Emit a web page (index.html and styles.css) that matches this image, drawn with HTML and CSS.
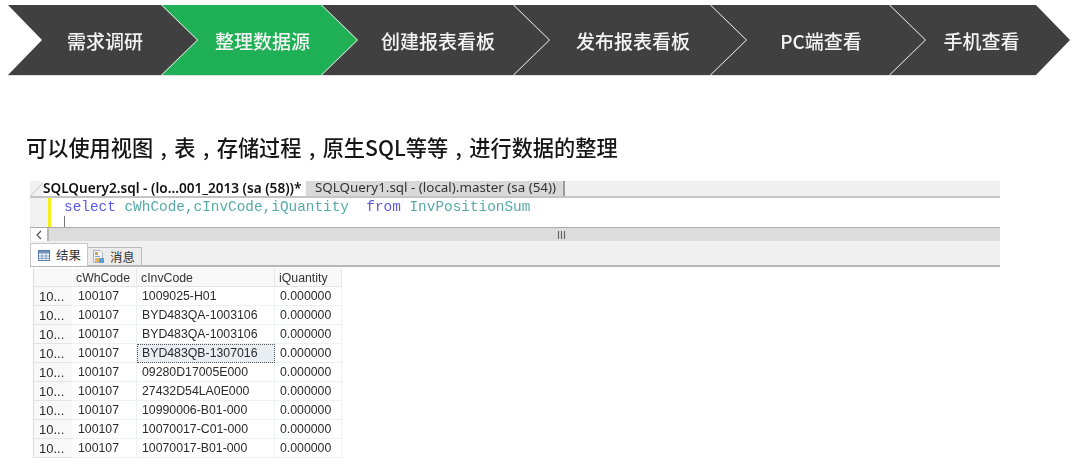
FILE: index.html
```html
<!DOCTYPE html>
<html lang="zh-CN">
<head>
<meta charset="utf-8">
<title>整理数据源</title>
<link rel="stylesheet" href="styles.css">
</head>
<body>
<div class="page">
  <nav class="steps">
    <div class="step first s1"><span>需求调研</span></div>
    <div class="step active s2"><span>整理数据源</span></div>
    <div class="step s3"><span>创建报表看板</span></div>
    <div class="step s4"><span>发布报表看板</span></div>
    <div class="step s5"><span>PC端查看</span></div>
    <div class="step s6"><span>手机查看</span></div>
  </nav>
  <h1 class="title">可以使用视图<span class="cm">,</span>表<span class="cm">,</span>存储过程<span class="cm">,</span>原生SQL等等<span class="cm">,</span>进行数据的整理</h1>
  <section class="ssms">
    <div class="doc-tabs">
      <svg class="slant" width="13" height="16" viewBox="0 0 13 16"><path d="M0 15.5 L13 2" stroke="#c4c4c4" fill="none"/></svg>
      <div class="doc-tab on">SQLQuery2.sql - (lo...001_2013 (sa (58))*</div>
      <div class="doc-tab off">SQLQuery1.sql - (local).master (sa (54))</div>
    </div>
    <div class="editor">
      <div class="gutter"></div>
      <div class="yellow"></div>
      <div class="code">
        <div class="line"><span class="kw">select</span> <span class="id">cWhCode,cInvCode,iQuantity</span>  <span class="kw">from</span> <span class="id">InvPositionSum</span></div>
        <div class="caret"></div>
      </div>
    </div>
    <div class="hscroll">
      <div class="arrow"><svg width="8" height="10" viewBox="0 0 8 10"><path d="M6 1 L2 5 L6 9" stroke="#555" stroke-width="1.2" fill="none"/></svg></div>
      <div class="thumb"><svg width="10" height="8" viewBox="0 0 10 8"><path d="M1.500 0V8M4.500 0V8M7.500 0V8" stroke="#666" stroke-width="1.200"/></svg></div>
    </div>
    <div class="result-tabs">
      <div class="r-tab on">
        <svg width="12" height="11" viewBox="0 0 12 11"><rect x="0.500" y="0.500" width="11" height="10" fill="#fff" stroke="#5b7fa8"/><rect x="1" y="1" width="10" height="2.500" fill="#6f94c0"/><path d="M0.500 6H11.500M0.500 8.300H11.500M4 3.500V10.500M8 3.500V10.500" stroke="#7f9dbe"/></svg>
        <span>结果</span>
      </div>
      <div class="r-tab off">
        <svg width="13" height="14" viewBox="0 0 13 14"><path d="M1.500 0.500H8L10.500 3V12.500H1.500Z" fill="#f6f6f6" stroke="#a9b4c0"/><rect x="3" y="2" width="3" height="3" fill="#d9a05a"/><rect x="3" y="6" width="5" height="1" fill="#7fa6d0"/><rect x="3" y="8" width="4" height="4" fill="#e7b45e"/><rect x="7" y="8" width="5" height="5" fill="#5f9fd8"/></svg>
        <span>消息</span>
      </div>
    </div>
    <div class="grid">
      <div class="cell rh"></div><div class="cell hd c1">cWhCode</div><div class="cell hd c2">cInvCode</div><div class="cell hd c3">iQuantity</div>
      <div class="cell rh">10...</div><div class="cell c1">100107</div><div class="cell c2">1009025-H01</div><div class="cell c3">0.000000</div>
      <div class="cell rh">10...</div><div class="cell c1">100107</div><div class="cell c2">BYD483QA-1003106</div><div class="cell c3">0.000000</div>
      <div class="cell rh">10...</div><div class="cell c1">100107</div><div class="cell c2">BYD483QA-1003106</div><div class="cell c3">0.000000</div>
      <div class="cell rh">10...</div><div class="cell c1">100107</div><div class="cell c2 sel">BYD483QB-1307016</div><div class="cell c3">0.000000</div>
      <div class="cell rh">10...</div><div class="cell c1">100107</div><div class="cell c2">09280D17005E000</div><div class="cell c3">0.000000</div>
      <div class="cell rh">10...</div><div class="cell c1">100107</div><div class="cell c2">27432D54LA0E000</div><div class="cell c3">0.000000</div>
      <div class="cell rh">10...</div><div class="cell c1">100107</div><div class="cell c2">10990006-B01-000</div><div class="cell c3">0.000000</div>
      <div class="cell rh">10...</div><div class="cell c1">100107</div><div class="cell c2">10070017-C01-000</div><div class="cell c3">0.000000</div>
      <div class="cell rh">10...</div><div class="cell c1">100107</div><div class="cell c2">10070017-B01-000</div><div class="cell c3">0.000000</div>
    </div>
  </section>
</div>
</body>
</html>
```
FILE: styles.css
```css
* { box-sizing: border-box; }
html, body { margin: 0; padding: 0; background: #fff; }
body { width: 1080px; height: 470px; overflow: hidden; font-family: "Noto Sans CJK SC", "Liberation Sans", sans-serif; }
.page { padding: 5px 0 0 8px; }

.steps { display: flex; height: 71px; width: 1028px; border-bottom: 1px solid #e2e2e2; }
.step {
  --d: 36px;
  --n: 36px;
  flex: none;
  height: 70px;
  margin-left: -35px;
  background: #404040;
  color: #f4f4f4;
  font-size: 19px;
  font-weight: 500;
  display: flex;
  align-items: center;
  justify-content: center;
  clip-path: polygon(0 0, calc(100% - var(--d)) 0, 100% 50%, calc(100% - var(--d)) 100%, 0 100%, var(--n) 50%);
}
.step span { filter: blur(0.3px); white-space: nowrap; }
.first { --n: 34px; margin-left: 0; }
.active { background: #1fb056; }
.s1 { width: 189px; padding-left: 5px; }
.s2 { width: 195px; padding-left: 6px; }
.s3 { width: 227px; padding-left: 5px; }
.s4 { width: 232px; padding-left: 6px; }
.s5 { width: 214px; padding-left: 6px; }
.s6 { width: 180px; padding-left: 3px; --d: 34px; }

.title {
  margin: 54px 0 0 18px;
  height: 34px;
  font-size: 21.2px;
  line-height: 34px;
  font-weight: 500;
  color: #161616;
  white-space: nowrap;
  filter: blur(0.25px);
}
.cm { display: inline-block; width: 1em; text-align: center; }

.ssms { margin: 17px 0 0 22px; width: 970px; }
.doc-tabs { display: flex; height: 17px; background: #f0f0f0; border-bottom: 2px solid #c4c4c4; align-items: stretch; }
.slant { flex: none; }
.doc-tab { font-family: "Noto Sans", sans-serif; font-size: 13.6px; line-height: 13px; white-space: nowrap; color: #222; filter: blur(0.25px); }
.doc-tab.on { width: 262px; font-weight: 600; color: #111; background: #fff; }
.doc-tab.off { width: 260px; padding-left: 9px; font-size: 13.4px; background: #d9d9d9; border-left: 1px solid #f8f8f8; border-right: 2px solid #9c9c9c; color: #333; }

.editor { display: flex; height: 29px; background: #fff; }
.gutter { width: 18px; background: #f1f1f1; }
.yellow { width: 3px; background: #f2ef1c; }
.code { padding-left: 13px; }
.line { font-family: "Liberation Mono", monospace; font-size: 14.4px; line-height: 18px; white-space: pre; filter: blur(0.25px); }
.kw { color: #5a58ea; }
.id { color: #55aaa8; }
.caret { width: 1px; height: 11px; background: #777; }

.hscroll { display: flex; height: 14px; background: #dcdcdc; border-top: 1px solid #ababab; }
.arrow { width: 18px; background: #fff; border-right: 2px solid #b5b5b5; display: flex; align-items: center; justify-content: center; margin-left: 1px; }
.thumb { flex: 1; display: flex; align-items: center; justify-content: center; padding-right: 8px; padding-left: 82px; }

.result-tabs { display: flex; height: 26px; align-items: flex-end; background: #f0f0f0; border-bottom: 2px solid #b6b6b6; }
.r-tab { display: flex; align-items: center; font-size: 12.4px; color: #333; }
.r-tab.on { width: 58px; height: 23px; margin-bottom: -1px; padding-left: 7px; gap: 6px; background: #fff; border: 1px solid #c9c9c9; border-bottom: 0; z-index: 1; }
.r-tab.off { width: 54px; height: 18px; padding-left: 4px; gap: 5px; background: #ececec; border: 1px solid #b9b9b9; border-bottom: 0; border-left: 0; }

.grid {
  display: grid;
  grid-template-columns: 39px 64px 138px 67px;
  grid-auto-rows: 19px;
  margin: 1px 0 0 3px;
  width: 308px;
  font-family: "Liberation Sans", sans-serif;
  font-size: 12.3px;
  color: #2a2a2a;
  border-left: 1px solid #dcdcdc;
}
.cell { line-height: 18px; white-space: nowrap; border-right: 1px solid #edf1f4; border-bottom: 1px solid #edf1f4; filter: blur(0.2px); }
.rh { background: #f8f8f8; padding-left: 5px; border-right: 1px solid #fff; border-bottom: 1px solid #e4e4e4; font-size: 13px; line-height: 20px; }
.hd { background: #f8f8f8; border-right: 1px solid #e8e8e8; border-bottom: 1px solid #e4e4e4; padding-top: 1px; color: #333; }
.c1 { padding-left: 5px; }
.c2 { padding-left: 5px; }
.c3 { padding-left: 5px; }
.hd.c2 { padding-left: 4px; }
.hd.c3 { padding-left: 4px; }
.hd.c1 { padding-left: 3px; }
.sel { background: #e9eef3; outline: 1px dotted #555; outline-offset: -1px; }
```
